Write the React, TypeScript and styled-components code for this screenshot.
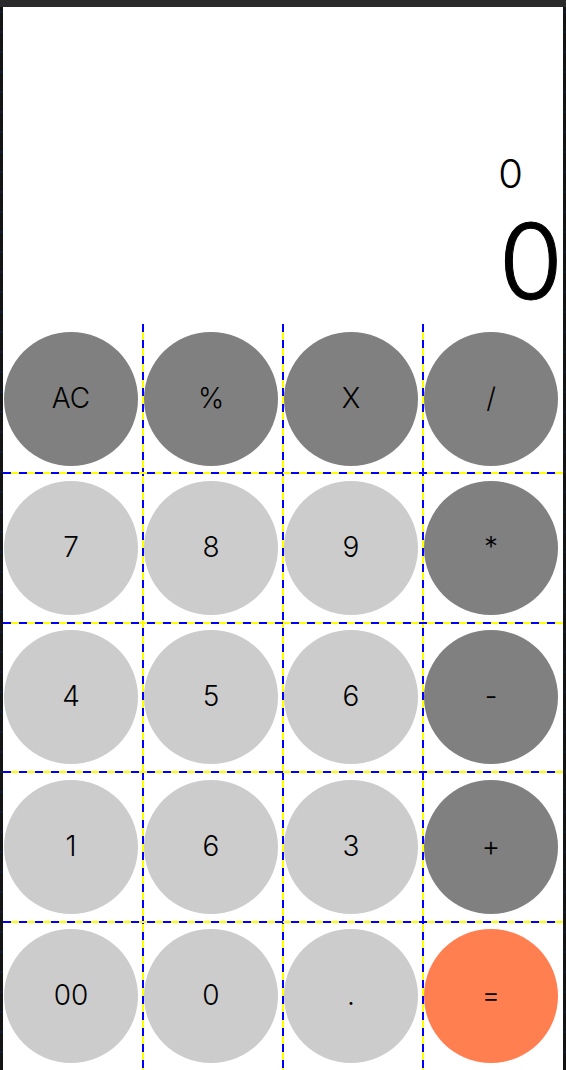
import React, { useState } from "react";
import styled, { createGlobalStyle } from "styled-components";

const GlobalStyle = createGlobalStyle`
  * { box-sizing: border-box; }
  body { margin: 0; background: #2b2b2b; font-family: Inter, "Liberation Sans", sans-serif; }
`;

const Shell = styled.div`
  height: 100vh;
  display: flex;
  flex-direction: column;
  padding-top: 7px;
  overflow: hidden;
`;

const Frame = styled.div`
  flex: 1;
  display: flex;
  flex-direction: column;
  padding: 0 3px;
  background: repeating-linear-gradient(#141414 0 4px, #101c38 4px 6px, #141414 6px 20px);
`;

const Calculator = styled.main`
  flex: 1;
  display: flex;
  flex-direction: column;
  background: #fff;
`;

const Display = styled.section`
  height: 317px;
  display: flex;
  flex-direction: column;
  align-items: flex-end;
  justify-content: flex-end;
  font-weight: 300;
`;

const History = styled.output`
  padding-right: 40px;
  font-size: 40px;
  line-height: 48px;
`;

const Current = styled.output`
  font-size: 104px;
  line-height: 126px;
  -webkit-text-stroke: 1px #000;
`;

const Keypad = styled.section`
  flex: 1;
  margin-bottom: -1px;
  display: grid;
  grid-template: repeat(5, minmax(0, 1fr)) / repeat(4, minmax(0, 1fr));
`;

const tones = { dark: "#808080", light: "#cccccc", accent: "#ff7f50" };
type Tone = keyof typeof tones;

const Key = styled.button<{ $tone: Tone; $row: number; $col: number }>`
  grid-area: ${(p) => p.$row} / ${(p) => p.$col};
  place-self: center;
  width: 134px;
  height: 134px;
  margin: 0 4px 0 0;
  padding: 0 0 2px;
  border: 0;
  border-radius: 50%;
  background: ${(p) => tones[p.$tone]};
  color: #000;
  font: 300 28px/34px Inter, "Liberation Sans", sans-serif;
  cursor: pointer;
`;

const ColumnGuide = styled.i<{ $col: number }>`
  grid-area: 1 / ${(p) => p.$col} / -1;
  justify-self: end;
  width: 2px;
  margin-right: -1px;
  background: repeating-linear-gradient(#00f 0 8px, #ff0 8px 16px);
`;

const RowGuide = styled.i<{ $row: number }>`
  grid-row: ${(p) => p.$row};
  grid-column: 1 / -1;
  align-self: end;
  height: 2px;
  margin-bottom: -1px;
  background: repeating-linear-gradient(to right, #00f 0 8px, #ff0 8px 16px);
`;

const rows = [
  ["AC", "%", "X", "/"],
  ["7", "8", "9", "*"],
  ["4", "5", "6", "-"],
  ["1", "6", "3", "+"],
  ["00", "0", ".", "="],
];

const toneOf = (row: number, col: number): Tone =>
  row === 4 && col === 3 ? "accent" : row === 0 || col === 3 ? "dark" : "light";

export default function App() {
  const [value, setValue] = useState("0");

  const press = (key: string) => {
    if (key === "AC") setValue("0");
    else if (/^[0-9.]+$/.test(key))
      setValue((v) => (v === "0" && key !== "." ? key.replace(/^0+/, "") || "0" : v + key));
  };

  return (
    <>
      <GlobalStyle />
      <Shell>
        <Frame>
          <Calculator>
            <Display>
              <History>0</History>
              <Current>{value}</Current>
            </Display>
            <Keypad>
              {rows.map((keys, r) =>
                keys.map((key, c) => (
                  <Key key={`${r}-${c}`} type="button" $tone={toneOf(r, c)} $row={r + 1} $col={c + 1} onClick={() => press(key)}>
                    {key}
                  </Key>
                ))
              )}
              {[1, 2, 3].map((col) => <ColumnGuide key={col} $col={col} />)}
              {[1, 2, 3, 4].map((row) => <RowGuide key={row} $row={row} />)}
            </Keypad>
          </Calculator>
        </Frame>
      </Shell>
    </>
  );
}
